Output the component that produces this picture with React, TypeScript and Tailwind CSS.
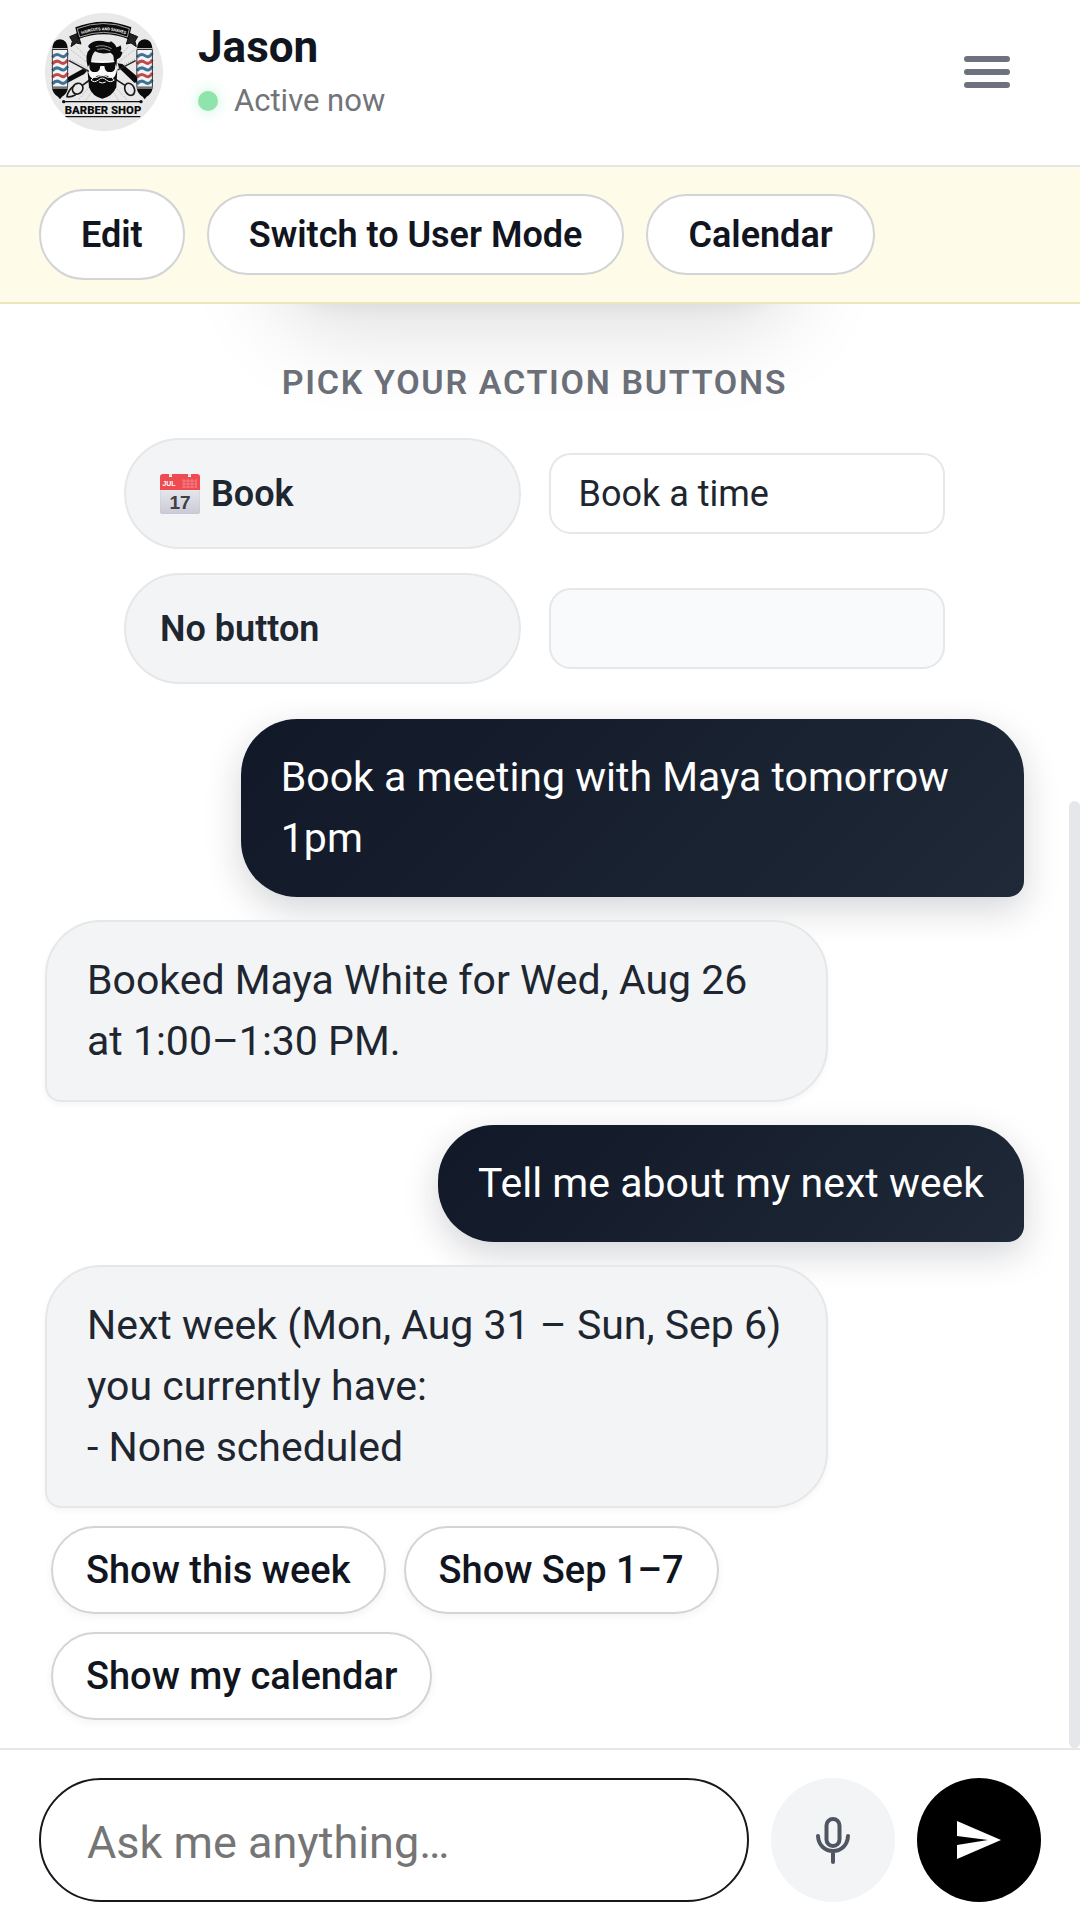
import { useState } from 'react';

interface Message {
  id: number;
  from: 'user' | 'assistant';
  lines: string[];
}

interface ActionRow {
  id: string;
  label: string;
  icon?: boolean;
}

const messages: Message[] = [
  { id: 1, from: 'user', lines: ['Book a meeting with Maya tomorrow 1pm'] },
  { id: 2, from: 'assistant', lines: ['Booked Maya White for Wed, Aug 26 at 1:00–1:30 PM.'] },
  { id: 3, from: 'user', lines: ['Tell me about my next week'] },
  {
    id: 4,
    from: 'assistant',
    lines: ['Next week (Mon, Aug 31 – Sun, Sep 6) you currently have:', '- None scheduled'],
  },
];

const actionRows: ActionRow[] = [
  { id: 'book', label: 'Book', icon: true },
  { id: 'none', label: 'No button' },
];

const suggestions = ['Show this week', 'Show Sep 1–7', 'Show my calendar'];

function BarberPole({ x }: { x: number }) {
  return (
    <g transform={`translate(${x} 0)`}>
      <path d="M4 150 Q6 118 28 118 Q50 118 52 150 L52 265 Q48 284 34 290 L28 298 L22 290 Q8 284 4 265 Z" fill="#0b0b0b" />
      <rect x="5" y="150" width="46" height="110" fill="#f4f4f4" />
      <g fill="none" strokeWidth="9">
        <path d="M5 172 q12 -14 24 -5 t22 -8" stroke="#3f7396" />
        <path d="M5 192 q12 -14 24 -5 t22 -8" stroke="#c0494c" />
        <path d="M5 212 q12 -14 24 -5 t22 -8" stroke="#3f7396" />
        <path d="M5 232 q12 -14 24 -5 t22 -8" stroke="#c0494c" />
        <path d="M5 252 q12 -14 24 -5 t22 -8" stroke="#3f7396" />
      </g>
      <path d="M5 146 H51 M5 264 H51" stroke="#ddd" strokeWidth="3" />
      <path d="M5 150 V260 M51 150 V260" stroke="#111" strokeWidth="2" />
    </g>
  );
}

function ShopLogo() {
  return (
    <svg viewBox="50 39 354 354" className="size-[118px] shrink-0 rounded-full" role="img" aria-label="Barber shop">
      <rect x="50" y="39" width="354" height="354" fill="#e9e9e9" />
      <g stroke="#8c8c8c" strokeWidth="2" strokeDasharray="3 4">
        <path d="M180 190 L128 150 M178 205 L122 176 M180 178 L145 140 M266 190 L318 150 M268 205 L322 176 M264 178 L300 140" />
        <path d="M182 262 L150 300 M190 275 L172 302 M262 262 L296 300 M254 275 L272 302" />
      </g>
      {/* ribbon */}
      <path d="M124 110 L148 100 L158 132 L144 129 L128 140 L132 124 Z" fill="#222" stroke="#111" strokeWidth="3" />
      <path d="M328 110 L304 100 L294 132 L308 129 L324 140 L320 124 Z" fill="#222" stroke="#111" strokeWidth="3" />
      <path d="M141 82 Q226 48 309 82 L301 118 Q226 88 149 118 Z" fill="#0b0b0b" />
      <path d="M147 86 Q226 55 303 86 L297 111 Q226 83 154 111 Z" fill="none" stroke="#e9e9e9" strokeWidth="2" />
      <path id="ribbon-line" d="M150 107 Q226 74 302 107" fill="none" />
      <text fontFamily="Roboto, sans-serif" fontWeight="700" fontSize="12" fill="#fff">
        <textPath href="#ribbon-line" startOffset="50%" textAnchor="middle">
          HAIRCUTS AND SHAVES
        </textPath>
      </text>
      {/* razor and scissors crossed behind the head */}
      <path d="M108 246 L114 234 L164 206 L176 212 L168 222 L118 248 Z" fill="#0b0b0b" />
      <path d="M336 246 L332 234 L282 192 L268 190 L272 204 L318 248 Z" fill="#0b0b0b" />
      <path d="M122 182 L182 214 M322 182 L268 210" stroke="#222" strokeWidth="4" />
      <g fill="none" stroke="#1a1a1a" strokeWidth="5">
        <ellipse cx="148" cy="266" rx="15" ry="17" transform="rotate(40 148 266)" />
        <ellipse cx="304" cy="268" rx="14" ry="19" transform="rotate(-25 304 268)" />
        <path d="M138 256 Q118 272 116 290 Q128 292 142 284 M162 256 L184 240 M290 256 L262 238" />
      </g>
      {/* face */}
      <path d="M186 182 L258 182 L262 232 Q252 262 222 262 Q192 262 182 232 Z" fill="#fafafa" />
      <path d="M178 200 Q168 160 186 146 Q176 140 182 134 Q200 116 236 126 Q250 128 246 122 Q262 132 264 142 Q274 140 276 136 Q282 146 276 154 Q284 156 282 160 Q276 176 266 178 L264 200 L256 180 Q258 164 246 158 Q216 164 200 154 Q188 168 188 188 Z" fill="#0b0b0b" />
      <path d="M202 140 Q226 132 250 146 M206 148 Q228 142 246 152" fill="none" stroke="#ddd" strokeWidth="2" />
      <path d="M182 186 Q222 192 262 186 L260 206 Q256 218 242 216 Q230 216 228 198 L216 198 Q214 216 202 216 Q188 218 184 206 Z" fill="#0b0b0b" />
      <path d="M177 206 Q184 240 198 234 Q210 222 222 230 Q234 222 246 234 Q260 240 267 206 L264 262 Q252 290 222 296 Q192 290 182 262 Z" fill="#0b0b0b" />
      <path d="M188 240 Q198 250 210 240 Q222 228 234 240 Q246 250 258 240 Q250 228 238 232 Q222 222 206 232 Q196 228 188 240 Z" fill="#0b0b0b" stroke="#fafafa" strokeWidth="3" />
      <path d="M212 246 Q222 252 232 246" fill="none" stroke="#fafafa" strokeWidth="3" />
      <BarberPole x={67} />
      <BarberPole x={321} />
      <path d="M106 305 H338 M110 350 H336" stroke="#111" strokeWidth="4" />
      <circle cx="106" cy="305" r="5" fill="#111" />
      <circle cx="338" cy="305" r="5" fill="#111" />
      <text x="224" y="341" textAnchor="middle" fontFamily="Roboto, sans-serif" fontWeight="900" fontSize="34" fill="#0b0b0b">
        BARBER SHOP
      </text>
    </svg>
  );
}

function CalendarIcon() {
  return (
    <svg viewBox="0 0 40 40" className="size-10 shrink-0" aria-hidden="true">
      <defs>
        <linearGradient id="cal-page" x1="0" y1="0" x2="0" y2="1">
          <stop offset="0" stopColor="#f7f7f9" />
          <stop offset="1" stopColor="#c9cad6" />
        </linearGradient>
      </defs>
      <rect y="1" width="40" height="39" rx="3" fill="url(#cal-page)" stroke="#c3c4cc" strokeWidth="0.6" />
      <path d="M0 16 V3 Q0 0 3 0 H9 V3 H12 V0 H28 V3 H31 V0 H37 Q40 0 40 3 V16 Z" fill="#ee4b52" />
      <path d="M22 7 H37 M22 10 H37 M22 13 H37 M24 5 V14 M28 5 V14 M32 5 V14 M36 5 V14" stroke="#f58a8e" strokeWidth="0.8" />
      <text x="9" y="12" textAnchor="middle" fontFamily="Liberation Sans, sans-serif" fontWeight="700" fontSize="7" fill="#fff">
        JUL
      </text>
      <text x="20" y="35" textAnchor="middle" fontFamily="Liberation Sans, sans-serif" fontWeight="700" fontSize="19" fill="#3f4045">
        17
      </text>
    </svg>
  );
}

function Bubble({ message }: { message: Message }) {
  const isUser = message.from === 'user';

  return (
    <div
      className={
        isUser
          ? 'max-w-4/5 self-end rounded-[56px] rounded-br-2xl bg-linear-135 from-[#111827] to-[#1f2937] px-10 py-7 text-white shadow-[0_12px_36px_rgba(17,24,39,0.18)]'
          : 'max-w-4/5 self-start rounded-[56px] rounded-bl-2xl border-2 border-[#e5e7e9] bg-[#f3f4f6] px-10 py-7 text-[#20262f] shadow-[0_3px_6px_rgba(17,24,39,0.04)]'
      }
    >
      {message.lines.map((line) => (
        <p key={line} className="text-[41px] leading-[61px]">
          {line}
        </p>
      ))}
    </div>
  );
}

export default function App() {
  const [draft, setDraft] = useState('');
  const [values, setValues] = useState<Record<string, string>>({ book: 'Book a time', none: '' });

  return (
    <div className="flex h-screen flex-col bg-white font-['Roboto',sans-serif] text-[#111520]">
      <header className="flex items-start justify-between border-b-2 border-[#e5e7e7] pt-[13px] pr-[70px] pb-[34px] pl-[45px]">
        <div className="flex gap-[35px]">
          <ShopLogo />
          <div className="pt-2">
            <h1 className="text-[44px] leading-[52px] font-bold">Jason</h1>
            <p className="flex items-center gap-4 text-[31px] leading-[56px] text-[#717478]">
              <span className="size-5 rounded-full bg-[#8fe3ac] shadow-[0_0_14px_rgba(74,222,128,0.35)]" />
              Active now
            </p>
          </div>
        </div>
        <button type="button" aria-label="Menu" className="mt-[43px] flex flex-col gap-[7px]">
          <span className="h-[6px] w-[46px] rounded-full bg-[#6d727d]" />
          <span className="h-[6px] w-[46px] rounded-full bg-[#6d727d]" />
          <span className="h-[6px] w-[46px] rounded-full bg-[#6d727d]" />
        </button>
      </header>

      <nav className="flex items-center gap-[22px] border-b-2 border-[#ebe5b8] bg-[#fefbe9] px-[39px] py-[22px] text-[36px] font-semibold">
        <button type="button" className="h-[91px] rounded-full border-2 border-[#d2d4d5] bg-white px-10">
          Edit
        </button>
        <button type="button" className="h-[81px] rounded-full border-2 border-[#d2d4d5] bg-white px-10">
          Switch to User Mode
        </button>
        <button type="button" className="h-[81px] rounded-full border-2 border-[#d2d4d5] bg-white px-10">
          Calendar
        </button>
      </nav>

      <main className="flex min-h-0 flex-1">
        <div className="flex min-w-0 flex-1 flex-col justify-end overflow-hidden px-[45px] pb-7">
          <div className="h-60 w-[520px] shrink-0 self-center rounded-[60px] bg-white shadow-[0_30px_90px_rgba(0,0,0,0.13),0_6px_20px_rgba(0,0,0,0.06)]" />

          <section className="mx-auto mt-[62px] w-full max-w-[821px] shrink-0">
            <h2 className="text-center text-[34px] leading-10 font-semibold tracking-wider text-[#6b6f78]">
              PICK YOUR ACTION BUTTONS
            </h2>
            <div className="mt-9 flex flex-col gap-6">
              {actionRows.map((row) => (
                <div key={row.id} className="grid grid-cols-2 items-center gap-7">
                  <button
                    type="button"
                    className="flex h-[111px] items-center gap-[11px] rounded-full border-2 border-[#e5e7e9] bg-[#f3f4f6] px-[34px] text-[36px] font-semibold text-[#20262f]"
                  >
                    {row.icon && <CalendarIcon />}
                    {row.label}
                  </button>
                  <input
                    type="text"
                    aria-label={`${row.label} text`}
                    value={values[row.id]}
                    onChange={(e) => setValues({ ...values, [row.id]: e.target.value })}
                    disabled={row.id === 'none'}
                    className="h-[81px] w-full min-w-0 rounded-[22px] border-2 border-[#e5e7e9] bg-white px-7 text-[36px] text-[#20262f] disabled:bg-gray-50"
                  />
                </div>
              ))}
            </div>
          </section>

          <div className="mt-[35px] flex shrink-0 flex-col gap-[23px]">
            {messages.map((message) => (
              <Bubble key={message.id} message={message} />
            ))}
          </div>

          <div className="mt-[18px] flex max-w-4/5 shrink-0 flex-wrap gap-[18px] pl-[6px]">
            {suggestions.map((text) => (
              <button
                key={text}
                type="button"
                className="h-[88px] rounded-full border-2 border-[#d2d4d5] bg-white px-[33px] text-[38px] font-medium shadow-[0_3px_8px_rgba(17,24,39,0.05)]"
              >
                {text}
              </button>
            ))}
          </div>
        </div>
        <div className="h-[65.6%] w-[11px] self-end rounded-full bg-gray-200" />
      </main>

      <form className="flex gap-[22px] border-t-2 border-[#e5e7e9] px-[39px] py-7" onSubmit={(e) => e.preventDefault()}>
        <input
          type="text"
          aria-label="Message"
          placeholder="Ask me anything…"
          value={draft}
          onChange={(e) => setDraft(e.target.value)}
          className="h-[124px] min-w-0 flex-1 rounded-full border-2 border-[#15181c] bg-white px-[46px] pt-1 text-[45px] placeholder:text-[#757575]"
        />
        <button type="button" aria-label="Record" className="flex size-[124px] shrink-0 items-center justify-center rounded-full bg-[#f3f4f6]">
          <svg viewBox="0 0 34 47" className="h-[47px] w-[34px]" fill="none" stroke="#4f5661" strokeWidth="4" strokeLinecap="round">
            <rect x="10.5" y="2" width="13" height="27" rx="6.5" />
            <path d="M2 19 C3 39 31 39 32 19 M17 36 V45" />
          </svg>
        </button>
        <button type="submit" aria-label="Send" className="flex size-[124px] shrink-0 items-center justify-center rounded-full bg-black">
          <svg viewBox="0 0 44 38" className="h-[38px] w-11" fill="#fff">
            <path d="M0 0 L44 19 L0 38 V24 L31 19 L0 15 Z" />
          </svg>
        </button>
      </form>
    </div>
  );
}
